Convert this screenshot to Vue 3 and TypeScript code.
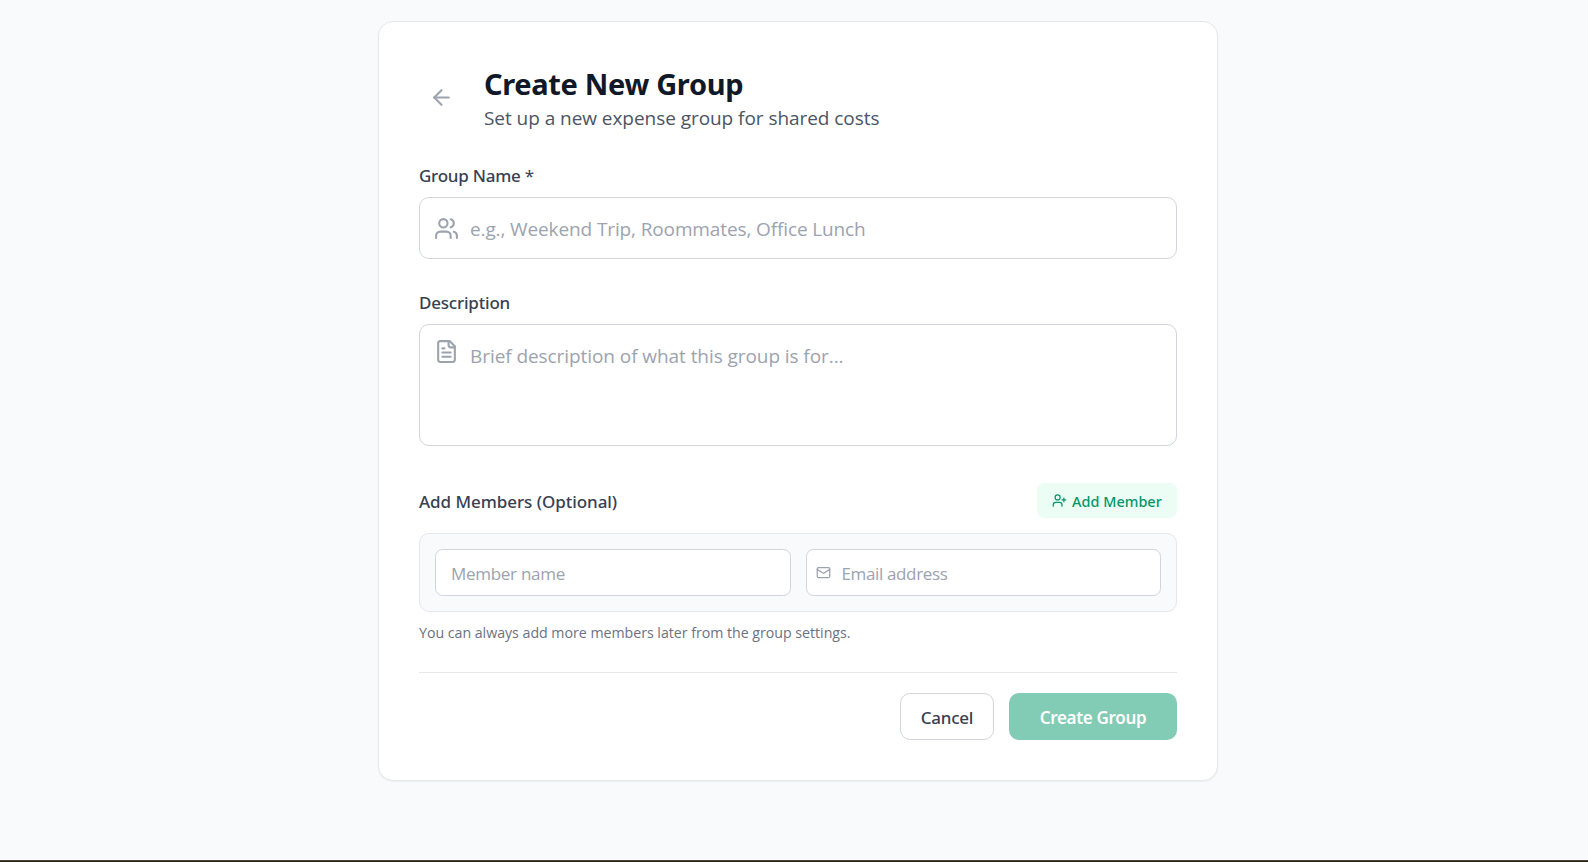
<script setup lang="ts">
import { ref } from 'vue'

interface Member {
  name: string
  email: string
}

const groupName = ref('')
const description = ref('')
const members = ref<Member[]>([{ name: '', email: '' }])

function addMember(): void {
  members.value.push({ name: '', email: '' })
}
</script>

<template>
  <div class="page">
    <main class="card">
      <header class="header">
        <button class="back" type="button" aria-label="Back">
          <svg class="icon" width="25" height="25" viewBox="0 0 24 24">
            <path d="m12 19-7-7 7-7" />
            <path d="M19 12H5" />
          </svg>
        </button>
        <div class="heading">
          <h1 class="title">Create New Group</h1>
          <p class="subtitle">Set up a new expense group for shared costs</p>
        </div>
      </header>

      <form class="form" @submit.prevent>
        <label class="label label-name" for="group-name">Group Name <span class="required">*</span></label>
        <div class="field name-field">
          <svg class="icon" width="25" height="25" viewBox="0 0 24 24">
            <path d="M16 21v-2a4 4 0 0 0-4-4H6a4 4 0 0 0-4 4v2" />
            <circle cx="9" cy="7" r="4" />
            <path d="M22 21v-2a4 4 0 0 0-3-3.87" />
            <path d="M16 3.13a4 4 0 0 1 0 7.75" />
          </svg>
          <input id="group-name" v-model="groupName" class="control large name-input" placeholder="e.g., Weekend Trip, Roommates, Office Lunch" />
        </div>

        <label class="label label-description" for="description">Description</label>
        <div class="field description-field">
          <svg class="icon" width="25" height="25" viewBox="0 0 24 24">
            <path d="M15 2H6a2 2 0 0 0-2 2v16a2 2 0 0 0 2 2h12a2 2 0 0 0 2-2V7Z" />
            <path d="M14 2v4a2 2 0 0 0 2 2h4" />
            <path d="M10 9H8" />
            <path d="M16 13H8" />
            <path d="M16 17H8" />
          </svg>
          <textarea id="description" v-model="description" class="control large description-input" placeholder="Brief description of what this group is for..."></textarea>
        </div>

        <div class="members-head">
          <span class="label label-members">Add Members (Optional)</span>
          <button class="add" type="button" @click="addMember">
            <svg class="icon" width="15" height="15" viewBox="0 0 24 24">
              <path d="M16 21v-2a4 4 0 0 0-4-4H6a4 4 0 0 0-4 4v2" />
              <circle cx="9" cy="7" r="4" />
              <path d="M19 8v6" />
              <path d="M22 11h-6" />
            </svg>
            <span class="add-text">Add Member</span>
          </button>
        </div>

        <div v-for="(member, index) in members" :key="index" class="member">
          <div class="field small-field">
            <input v-model="member.name" class="control small" placeholder="Member name" />
          </div>
          <div class="field small-field email-field">
            <svg class="icon" width="15" height="15" viewBox="0 0 24 24">
              <rect width="20" height="16" x="2" y="4" rx="2" />
              <path d="m22 7-8.97 5.7a1.94 1.94 0 0 1-2.06 0L2 7" />
            </svg>
            <input v-model="member.email" class="control small email-input" placeholder="Email address" />
          </div>
        </div>
        <p class="hint">You can always add more members later from the group settings.</p>

        <footer class="actions">
          <button class="button cancel" type="button">Cancel</button>
          <button class="button create" type="submit" disabled>Create Group</button>
        </footer>
      </form>
    </main>
    <div class="bottom-edge"></div>
  </div>
</template>

<style>
body {
  margin: 0;
  background: #f9fafb;
}
</style>

<style scoped>
.page {
  box-sizing: border-box;
  height: 862px;
  display: flex;
  flex-direction: column;
  align-items: center;
  justify-content: space-between;
  padding-top: 21px;
  padding-left: 8px;
  overflow: hidden;
  background: #f9fafb;
  font-family: "Open Sans", "Noto Sans", sans-serif;
}
.page * {
  box-sizing: border-box;
}
.card {
  width: 840px;
  height: 760px;
  padding: 40px;
  border: 1px solid #e5e7eb;
  border-radius: 15px;
  background: #fff;
  box-shadow: 0 1px 2px rgba(0, 0, 0, 0.05);
}
.icon {
  display: block;
  flex: none;
  fill: none;
  stroke: currentColor;
  stroke-width: 2;
  stroke-linecap: round;
  stroke-linejoin: round;
}
.header {
  display: flex;
  gap: 20px;
  height: 101px;
}
.back {
  width: 45px;
  height: 45px;
  margin: 13px 0 0;
  padding: 10px;
  border: 0;
  background: none;
  color: #9ca3af;
}
.heading {
  padding-top: 3px;
}
.title {
  margin: 0;
  font: 700 29px/38px "Noto Sans", "Open Sans", sans-serif;
  letter-spacing: -0.33px;
  color: #111827;
}
.subtitle {
  margin: 0;
  font-size: 19px;
  line-height: 31px;
  letter-spacing: -0.05px;
  color: #4b5563;
}
.label {
  display: block;
  font: 550 17px/25px "Noto Sans", "Open Sans", sans-serif;
  color: #374151;
}
.label-name {
  letter-spacing: -0.25px;
}
.required {
  font-weight: 400;
}
.label-description {
  margin-top: 31px;
  letter-spacing: -0.2px;
}
.label-members {
  padding-top: 1px;
  letter-spacing: -0.05px;
}
.field {
  display: flex;
  border: 1px solid #d1d5db;
  border-radius: 10px;
  background: #fff;
  color: #9ca3af;
}
.name-field {
  align-items: center;
  height: 62px;
  margin-top: 9px;
  padding-left: 14px;
  gap: 11px;
}
.description-field {
  height: 122px;
  margin-top: 9px;
  padding: 14px 0 0 14px;
  gap: 11px;
}
.control {
  display: block;
  flex: 1;
  min-width: 0;
  margin: 0;
  padding: 0;
  border: 0;
  outline: 0;
  resize: none;
  background: none;
  font: 400 17px/25px "Open Sans", "Noto Sans", sans-serif;
  color: #111827;
}
.control::placeholder {
  color: #9ca3af;
  opacity: 1;
}
.large {
  font-size: 19px;
  line-height: 30px;
}
.small {
  height: 27px;
  padding-top: 2px;
  letter-spacing: -0.28px;
}
.name-input {
  height: 32px;
  padding-top: 2px;
  letter-spacing: -0.12px;
}
.description-input {
  height: 100px;
  padding-top: 2px;
  letter-spacing: -0.07px;
}
.members-head {
  display: flex;
  align-items: center;
  justify-content: space-between;
  height: 35px;
  margin-top: 37px;
}
.add {
  display: flex;
  align-items: center;
  gap: 5px;
  width: 140px;
  height: 35px;
  padding: 0 0 0 15px;
  border: 0;
  border-radius: 7.5px;
  background: #ecfdf5;
  font: 550 14.4px/20px "Noto Sans", "Open Sans", sans-serif;
  letter-spacing: 0.04px;
  color: #059669;
  white-space: nowrap;
}
.add-text {
  padding-top: 2px;
}
.member {
  display: grid;
  grid-template-columns: 1fr 1fr;
  gap: 15px;
  height: 79px;
  margin-top: 15px;
  padding: 15px;
  border: 1px solid #e5e7eb;
  border-radius: 10px;
  background: #f9fafb;
}
.small-field {
  align-items: center;
  height: 47px;
  padding-left: 15px;
  border-radius: 7.5px;
}
.email-field {
  padding-left: 9px;
  gap: 11px;
}
.email-input {
  letter-spacing: -0.36px;
}
.hint {
  margin: 11px 0 0;
  font-size: 14.2px;
  line-height: 20px;
  letter-spacing: -0.02px;
  color: #6b7280;
}
.actions {
  display: flex;
  justify-content: flex-end;
  gap: 15px;
  margin-top: 29px;
  padding-top: 20px;
  border-top: 1px solid #e5e7eb;
}
.button {
  height: 47px;
  padding: 2px 0 0;
  border-radius: 10px;
  font: 550 17px/25px "Noto Sans", "Open Sans", sans-serif;
}
.cancel {
  width: 94px;
  border: 1px solid #d1d5db;
  background: #fff;
  letter-spacing: -0.25px;
  color: #374151;
}
.create {
  width: 168px;
  border: 0;
  background: #82cbb4;
  font-weight: 600;
  letter-spacing: -0.33px;
  color: #fff;
}
.bottom-edge {
  align-self: stretch;
  height: 2px;
  margin-left: -8px;
  border-top: 1px solid #4a4438;
  background: #2b2118;
}
</style>
